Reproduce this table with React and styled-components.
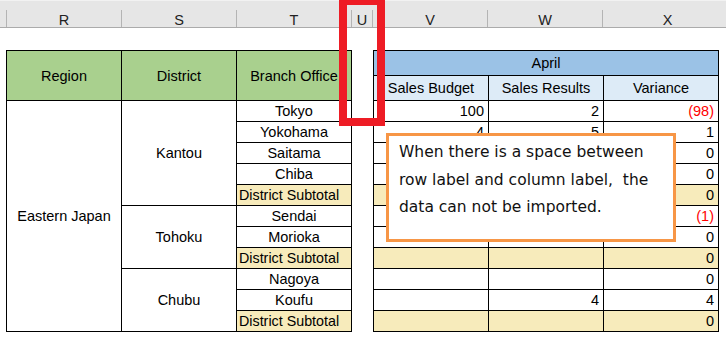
import React from 'react'
import styled, { createGlobalStyle } from 'styled-components'

const GlobalStyle = createGlobalStyle`
  body {
    margin: 0;
    background: #fff;
    font-family: "Liberation Sans", Arial, sans-serif;
    overflow: hidden;
  }
`

const Sheet = styled.div`
  position: relative;
  width: 726px;
  height: 337px;
  overflow: hidden;
`

const ColHeader = styled.div`
  display: flex;
  height: 28px;
  background: #e6e6e6;
  border-bottom: 1px solid #ababab;
  box-sizing: border-box;
  border-top: 1px solid #f2f2f2;
`

const ColCell = styled.div`
  width: ${p => p.w}px;
  flex: none;
  display: flex;
  align-items: flex-end;
`

const Letter = styled.div`
  flex: 1;
  height: 17px;
  padding-top: 2px;
  box-sizing: border-box;
  border-left: ${p => (p.first ? 'none' : '1px solid #b4b4b4')};
  display: flex;
  align-items: center;
  justify-content: center;
  font-size: 14.5px;
  color: #222;
`

const Tables = styled.div`
  display: flex;
  gap: 21px;
  padding: 22px 0 0 6px;
`

const Table = styled.table`
  border-collapse: collapse;
  table-layout: fixed;
  width: ${p => p.w}px;
  font-size: 14.5px;
  color: #000;

  td, th {
    border: 1px solid #000;
    padding: 0 3px;
    white-space: nowrap;
    overflow: hidden;
    font-weight: normal;
    box-sizing: border-box;
  }
`

const Row = styled.tr`
  height: ${p => p.h || 21}px;
`

const Head = styled.th`
  background: ${p => p.bg};
  text-align: center;
  vertical-align: middle;
`

const Label = styled.td`
  text-align: center;
  vertical-align: middle;
  background: #fff;
`

const Subtotal = styled.td`
  background: #f7ebbb;
  text-align: left;
  font-size: 14.3px;
  padding-left: 2px !important;
`

const Num = styled.td`
  text-align: right;
  background: ${p => (p.sub ? '#f7ebbb' : '#fff')};
  color: ${p => (p.neg ? '#ff0000' : '#000')};
  padding-right: 4px !important;
`

const Highlight = styled.div`
  position: absolute;
  left: 339px;
  top: -3px;
  width: 46px;
  height: 129px;
  border: 8px solid #ee1c25;
  box-sizing: border-box;
`

const Note = styled.div`
  position: absolute;
  left: 386px;
  top: 133px;
  width: 290px;
  height: 109px;
  box-sizing: border-box;
  border: 3px solid #f79646;
  background: #fff;
  padding: 3px 10px;
  font-family: "DejaVu Sans", sans-serif;
  font-size: 15.5px;
  line-height: 27.5px;
  color: #111;
`

const columns = [
  ['', 6], ['R', 115], ['S', 115], ['T', 115], ['U', 21], ['V', 115], ['W', 115], ['X', 130],
]

const rows = [
  { office: 'Tokyo', v: '100', w: '2', x: '(98)', neg: true },
  { office: 'Yokohama', v: '4', w: '5', x: '1' },
  { office: 'Saitama', v: '', w: '', x: '0' },
  { office: 'Chiba', v: '', w: '', x: '0' },
  { sub: true, x: '0' },
  { office: 'Sendai', v: '', w: '', x: '(1)', neg: true },
  { office: 'Morioka', v: '', w: '', x: '0' },
  { sub: true, x: '0' },
  { office: 'Nagoya', v: '', w: '', x: '0' },
  { office: 'Koufu', v: '', w: '4', x: '4' },
  { sub: true, x: '0' },
]

const districts = { 0: ['Kantou', 5], 5: ['Tohoku', 3], 8: ['Chubu', 3] }

export default function App() {
  return (
    <Sheet>
      <GlobalStyle />
      <ColHeader>
        {columns.map(([l, w], i) => (
          <ColCell key={i} w={w}>
            <Letter first={i === 0}>{l}</Letter>
          </ColCell>
        ))}
      </ColHeader>
      <Tables>
        <Table w={345}>
          <colgroup>
            <col style={{ width: 115 }} />
            <col style={{ width: 115 }} />
            <col style={{ width: 115 }} />
          </colgroup>
          <tbody>
            <Row h={50}>
              <Head bg="#a9d08e">Region</Head>
              <Head bg="#a9d08e">District</Head>
              <Head bg="#a9d08e">Branch Office</Head>
            </Row>
            {rows.map((r, i) => (
              <Row key={i}>
                {i === 0 && <Label rowSpan={11}>Eastern Japan</Label>}
                {districts[i] && <Label rowSpan={districts[i][1]}>{districts[i][0]}</Label>}
                {r.sub ? <Subtotal>District Subtotal</Subtotal> : <Label>{r.office}</Label>}
              </Row>
            ))}
          </tbody>
        </Table>
        <Table w={345}>
          <colgroup>
            <col style={{ width: 115 }} />
            <col style={{ width: 115 }} />
            <col style={{ width: 115 }} />
          </colgroup>
          <tbody>
            <Row h={25}>
              <Head bg="#9bc2e6" colSpan={3}>April</Head>
            </Row>
            <Row h={25}>
              <Head bg="#ddebf7">Sales Budget</Head>
              <Head bg="#ddebf7">Sales Results</Head>
              <Head bg="#ddebf7">Variance</Head>
            </Row>
            {rows.map((r, i) => (
              <Row key={i}>
                <Num sub={r.sub}>{r.v}</Num>
                <Num sub={r.sub}>{r.w}</Num>
                <Num sub={r.sub} neg={r.neg}>{r.x}</Num>
              </Row>
            ))}
          </tbody>
        </Table>
      </Tables>
      <Highlight />
      <Note>
        When there is a space between row label and column label,&nbsp; the data can not be imported.
      </Note>
    </Sheet>
  )
}
